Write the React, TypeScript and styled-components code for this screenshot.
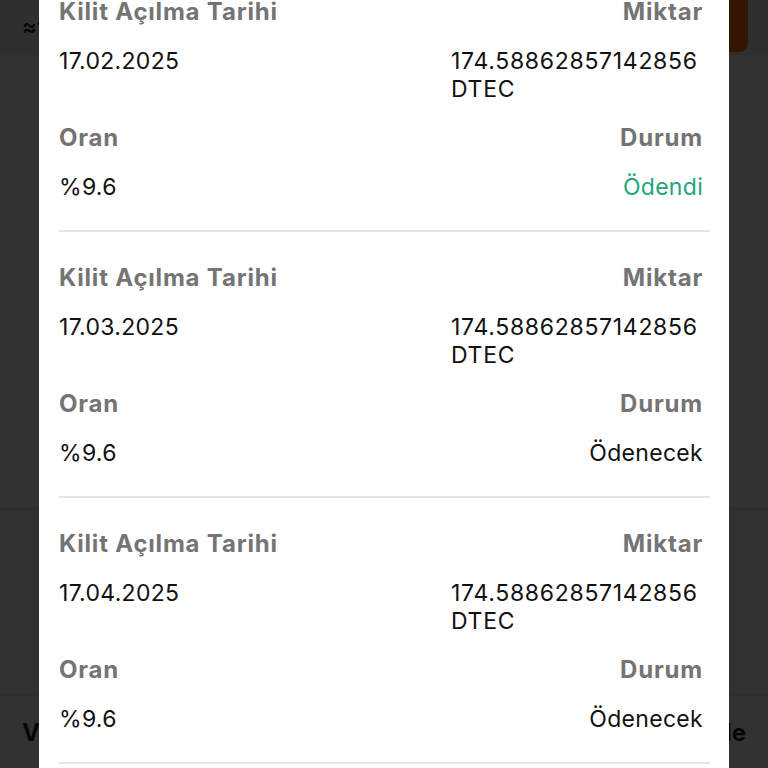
import React, { FC } from "react";
import styled, { createGlobalStyle } from "styled-components";

const GlobalStyle = createGlobalStyle`
    html, body {
        margin: 0;
        padding: 0;
        height: 768px;
        overflow: hidden;
        background: #f4f4f4;
        font-family: Inter, "Noto Sans", "Liberation Sans", sans-serif;
    }
`;

// page that lies under the overlay
const Page = styled['div']`
    display: flex;
    flex-direction: column;
    height: 768px;
    background: #f2f2f2;
`;
const PageHeader = styled['div']`
    height: 55px;
    display: flex;
    align-items: center;
    justify-content: space-between;
    padding-left: 22px;
    background: #ececec;
`;
const HeaderText = styled['span']`
    font-size: 22px;
    font-weight: 600;
    color: #111;
`;
const OrangeButton = styled['div']`
    align-self: flex-start;
    width: 150px;
    height: 52px;
    margin-right: 20px;
    border-radius: 0 0 8px 8px;
    background: #ff6a14;
`;
const PageCard = styled['div']`
    height: 453px;
    background: #f8f8f8;
    border-bottom: 1px solid #dcdcdc;
`;
const PageMiddle = styled['div']`
    height: 186px;
    background: #f2f2f2;
    border-bottom: 1px solid #e2e2e2;
`;
const PageFooter = styled['div']`
    flex: 1;
    display: flex;
    align-items: center;
    justify-content: space-between;
    padding: 0 22px;
    background: #fbfbfb;
`;
const FooterText = styled['span']`
    font-size: 24px;
    font-weight: 700;
    color: #1a1a1a;
`;

const Overlay = styled['div']`
    position: fixed;
    inset: 0;
    background: rgba(0, 0, 0, 0.8);
`;

const Modal = styled['div']`
    position: fixed;
    left: 39px;
    top: -34px;
    width: 690px;
    background: #ffffff;
`;

const Record = styled['div']`
    display: grid;
    grid-template-columns: 1fr 1fr;
    row-gap: 21px;
    width: 644px;
    margin-left: 20px;
    padding: 32px 7px 29px 0;
    border-bottom: 2px solid #e4e4e4;
`;

const Label = styled['div']<{ $right?: boolean }>`
    font-size: 24px;
    line-height: 28px;
    font-weight: 700;
    letter-spacing: 0.8px;
    color: #747474;
    white-space: nowrap;
    text-align: ${p => (p.$right ? "right" : "left")};
`;

const Value = styled['div']<{ $right?: boolean; $color?: string }>`
    font-size: 23px;
    line-height: 28px;
    font-weight: 400;
    letter-spacing: 0.3px;
    color: ${p => p.$color || "#111111"};
    text-align: ${p => (p.$right ? "right" : "left")};
`;

const Amount = styled['div']`
    justify-self: end;
    width: 252px;
    font-size: 23px;
    line-height: 28px;
    letter-spacing: 0.7px;
    color: #111111;
`;

interface IRecord {
    date: string;
    amount: string;
    rate: string;
    status: string;
    paid?: boolean;
}

const records: IRecord[] = [
    { date: "17.02.2025", amount: "174.58862857142856", rate: "%9.6", status: "Ödendi", paid: true },
    { date: "17.03.2025", amount: "174.58862857142856", rate: "%9.6", status: "Ödenecek" },
    { date: "17.04.2025", amount: "174.58862857142856", rate: "%9.6", status: "Ödenecek" },
    { date: "17.05.2025", amount: "174.58862857142856", rate: "%9.6", status: "Ödenecek" },
];

const RecordComponent: FC<IRecord> = ({ date, amount, rate, status, paid }) => {
    return (
        <Record>
            <Label>Kilit Açılma Tarihi</Label>
            <Label $right>Miktar</Label>
            <Value>{date}</Value>
            <Amount>{amount} DTEC</Amount>
            <Label>Oran</Label>
            <Label $right>Durum</Label>
            <Value>{rate}</Value>
            <Value $right $color={paid ? "#1ea57a" : undefined}>{status}</Value>
        </Record>
    );
};

const App: FC = () => {
    return (
        <>
            <GlobalStyle />
            <Page>
                <PageHeader>
                    <HeaderText>≈1.676,05 ₺</HeaderText>
                    <OrangeButton />
                </PageHeader>
                <PageCard />
                <PageMiddle />
                <PageFooter>
                    <FooterText>Vazgeç</FooterText>
                    <FooterText>Detaylı İncele</FooterText>
                </PageFooter>
            </Page>
            <Overlay />
            <Modal>
                {records.map(r => (
                    <RecordComponent key={r.date} {...r} />
                ))}
            </Modal>
        </>
    );
};

export default App;
